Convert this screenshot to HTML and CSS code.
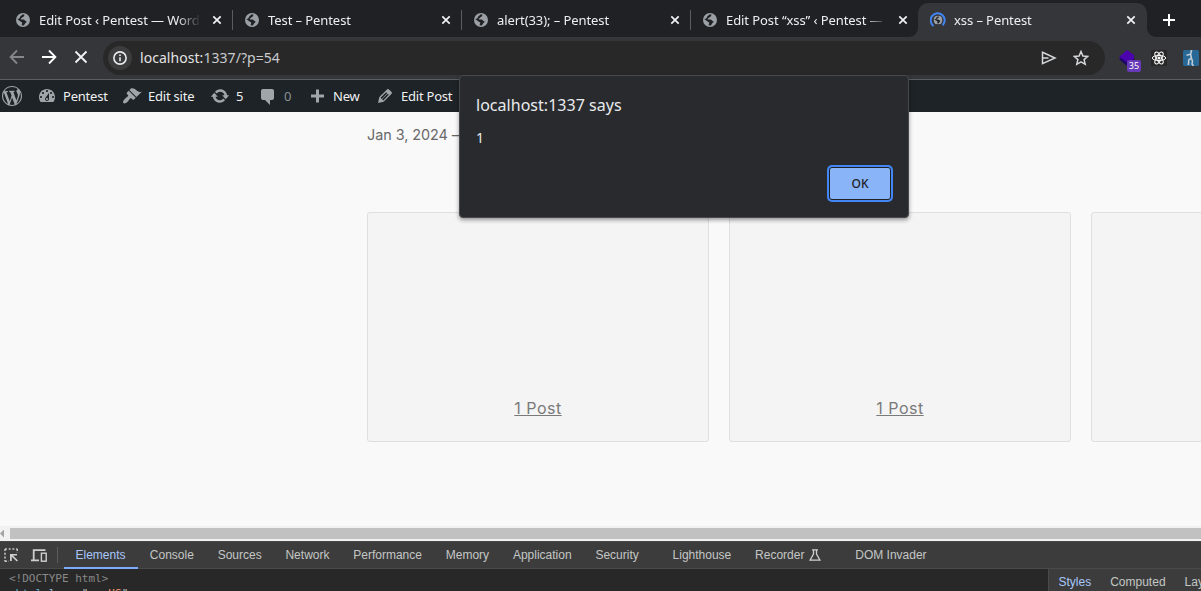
FILE: index.html
```html
<!DOCTYPE html>
<html lang="en">
<head>
<meta charset="utf-8">
<title>xss – Pentest</title>
<link rel="stylesheet" href="styles.css">
</head>
<body>
<svg class="defs" width="0" height="0">
  <symbol id="globe" viewBox="0 0 14 14"><circle cx="7" cy="7" r="7" fill="#9aa0a6"/><path d="M8.4 1.5C8.4 3 7.8 3.8 6.8 3.9 6 4 6.4 5.2 5.3 5.2 4.5 5.3 4.5 6.3 5.2 6.4H7.6C8.7 6.5 8.7 7.9 9.7 7.9 10.7 7.9 10.8 9 10 9.6 9 10.2 9 11.3 7.8 12.4L5.7 12.2C5.6 11 6.4 10.6 6.2 9.6 5.8 8.7 4.4 8.8 3.9 7.9L1.5 6.2C1.8 5.7 2.2 5.7 2.7 5.9L4 4.3C4.3 3 5.9 2.6 6.2 1.6Z" fill="#202124"/></symbol>
  <symbol id="close" viewBox="0 0 10 10"><path d="M1.3 1.3 8.7 8.7M8.7 1.3 1.3 8.7" stroke="#f1f3f4" stroke-width="1.7"/></symbol>
</svg>

<header class="tabs">
  <div class="tab"><svg class="fav"><use href="#globe"/></svg><span class="name">Edit Post ‹ Pentest — WordPress</span><svg class="x"><use href="#close"/></svg></div>
  <div class="tab"><svg class="fav"><use href="#globe"/></svg><span class="name">Test – Pentest</span><svg class="x"><use href="#close"/></svg></div>
  <div class="tab"><svg class="fav"><use href="#globe"/></svg><span class="name">alert(33); – Pentest</span><svg class="x"><use href="#close"/></svg></div>
  <div class="tab last"><svg class="fav"><use href="#globe"/></svg><span class="name">Edit Post “xss” ‹ Pentest — WordPress</span><svg class="x"><use href="#close"/></svg></div>
  <div class="tab active"><svg class="spin" viewBox="0 0 16 16"><path d="M3.6 14A7 7 0 1 1 12.7 13.2" fill="none" stroke="#4285f4" stroke-width="2"/><svg x="3.5" y="3.5" width="9" height="9"><use href="#globe"/></svg></svg><span class="name">xss – Pentest</span><svg class="x"><use href="#close"/></svg></div>
  <div class="newtab"><svg width="12" height="12" viewBox="0 0 12 12"><path d="M6 0V12M0 6H12" stroke="#fff" stroke-width="2"/></svg></div>
</header>

<nav class="toolbar">
  <svg class="nav" viewBox="0 0 16 16"><path d="M15 8H2M8 1.5 1.6 8 8 14.5" fill="none" stroke="#85878b" stroke-width="1.8"/></svg>
  <svg class="nav" viewBox="0 0 16 16"><path d="M1 8H14M8 1.5 14.4 8 8 14.5" fill="none" stroke="#fff" stroke-width="1.8"/></svg>
  <svg class="nav" viewBox="0 0 16 16"><path d="M2.5 2.5 13.5 13.5M13.5 2.5 2.5 13.5" stroke="#f1f3f4" stroke-width="1.8"/></svg>
  <div class="omnibox">
    <span class="info"><svg width="14" height="14" viewBox="0 0 14 14"><circle cx="7" cy="7" r="6.1" fill="none" stroke="#e8eaed" stroke-width="1.6"/><path d="M7 6.2V10.3M7 3.6V5.1" stroke="#e8eaed" stroke-width="1.6"/></svg></span>
    <span class="url">localhost:<i>1337/?p=54</i></span>
    <svg class="send" viewBox="0 0 16 14"><path d="M1.5 1.3 14 7 1.5 12.7V1.3ZM1.5 7H7.5" fill="none" stroke="#d5d7da" stroke-width="1.5"/></svg>
    <svg class="star" viewBox="0 0 16 16"><path d="M8 1.5 9.9 6 14.8 6.4 11.1 9.6 12.2 14.3 8 11.8 3.8 14.3 4.9 9.6 1.2 6.4 6.1 6Z" fill="none" stroke="#d5d7da" stroke-width="1.5"/></svg>
  </div>
  <div class="ext"><svg width="16" height="16" viewBox="0 0 16 16"><path d="M0 9 8 4 16 9 8 16Z" fill="#1c0769"/><path d="M0 7 8 0 15 5V9L8 12Z" fill="#4b04ad"/></svg><b>35</b></div>
  <svg class="react" viewBox="0 0 16 16"><rect width="16" height="16" fill="#282828"/><g fill="none" stroke="#fff"><ellipse cx="8" cy="8" rx="6.7" ry="2.6"/><ellipse cx="8" cy="8" rx="6.7" ry="2.6" transform="rotate(60 8 8)"/><ellipse cx="8" cy="8" rx="6.7" ry="2.6" transform="rotate(120 8 8)"/></g><circle cx="8" cy="8" r="1.5" fill="#fff"/></svg>
  <svg class="puppet" viewBox="0 0 16 16"><rect width="16" height="16" rx="1.5" fill="#286896"/><path d="M8.6 0 7.6 4.2 3.5 5.2M7.6 4.2 8.5 8.5M5.8 9.5 8.5 8.5 9.5 11M5.8 9.5 5.4 15" fill="none" stroke="#c3cfd9" stroke-width="1.6"/><path d="M9.5 11 9 14 10.5 16" fill="none" stroke="#c3cfd9" stroke-width="1.5"/></svg>
</nav>

<div class="wpbar">
  <svg class="wp" viewBox="0 0 20 20"><path d="M20 10c0-5.51-4.49-10-10-10C4.48 0 0 4.49 0 10c0 5.52 4.48 10 10 10 5.51 0 10-4.48 10-10zM7.78 15.37L4.37 6.22c.55-.02 1.17-.08 1.17-.08.5-.06.44-1.13-.06-1.11 0 0-1.45.11-2.37.11-.18 0-.37 0-.58-.01C4.12 2.69 6.87 1.11 10 1.11c2.33 0 4.45.87 6.05 2.34-.68-.11-1.65.39-1.65 1.58 0 .74.45 1.36.9 2.1.35.61.55 1.36.55 2.46 0 1.49-1.4 5-1.4 5l-3.03-8.37c.54-.02.82-.17.82-.17.5-.05.44-1.25-.06-1.22 0 0-1.44.12-2.38.12-.87 0-2.33-.12-2.33-.12-.5-.03-.56 1.2-.06 1.22l.92.08 1.26 3.41zM17.41 10c.24-.64.74-1.87.43-4.25.7 1.29 1.05 2.71 1.05 4.25 0 3.29-1.73 6.24-4.4 7.78.97-2.59 1.94-5.2 2.92-7.78zM6.1 18.09C3.12 16.65 1.11 13.53 1.11 10c0-1.3.23-2.48.72-3.59C3.25 10.3 4.67 14.2 6.1 18.09zm4.03-6.63l2.58 6.98c-.86.29-1.76.45-2.71.45-.79 0-1.57-.11-2.29-.33.81-2.38 1.62-4.74 2.42-7.1z"/></svg>
  <span class="item site"><svg viewBox="0 0 20 20"><path fill-rule="evenodd" d="M3.76 16h12.48c1.1-1.37 1.76-3.11 1.76-5 0-4.42-3.58-8-8-8s-8 3.58-8 8c0 1.89.66 3.63 1.76 5zM10 4c.55 0 1 .45 1 1s-.45 1-1 1-1-.45-1-1 .45-1 1-1zM6 6c.55 0 1 .45 1 1s-.45 1-1 1-1-.45-1-1 .45-1 1-1zm8 0c.55 0 1 .45 1 1s-.45 1-1 1-1-.45-1-1 .45-1 1-1zm-5.37 5.55L12 7v6c0 1.1-.9 2-2 2s-2-.9-2-2c0-.57.24-1.08.63-1.45zM4 10c.55 0 1 .45 1 1s-.45 1-1 1-1-.45-1-1 .45-1 1-1zm12 0c.55 0 1 .45 1 1s-.45 1-1 1-1-.45-1-1 .45-1 1-1zm-5 3c0-.55-.45-1-1-1s-1 .45-1 1 .45 1 1 1 1-.45 1-1z"/></svg>Pentest</span>
  <span class="item editsite"><svg viewBox="0 0 20 20"><path d="M14.48 11.06L7.41 3.99l1.5-1.5c.5-.56 2.3-.47 3.51.32 1.21.8 1.43 1.28 2.91 2.1 1.18.64 2.45 1.26 4.45.85zm-.71.71L6.7 4.7 4.93 6.47c-.39.39-.39 1.02 0 1.41l1.06 1.06c.39.39.39 1.03 0 1.42-.6.6-1.43 1.11-2.21 1.69-.35.26-.7.53-1.01.84C1.43 14.23.4 16.08 1.4 17.07c.99 1 2.84-.03 4.18-1.36.31-.31.58-.66.85-1.02.57-.78 1.08-1.61 1.69-2.21.39-.39 1.02-.39 1.41 0l1.06 1.06c.39.39 1.02.39 1.41 0z"/></svg>Edit site</span>
  <span class="item updates"><svg viewBox="0 0 20 20"><path d="M10.2 3.28c3.53 0 6.43 2.61 6.92 6h2.08l-3.5 4-3.5-4h2.32c-.45-1.97-2.21-3.45-4.32-3.45-1.45 0-2.73.71-3.54 1.78L4.95 5.66C6.23 4.2 8.11 3.28 10.2 3.28zm-.4 13.44c-3.52 0-6.43-2.61-6.92-6H.8l3.5-4c1.17 1.33 2.33 2.67 3.5 4H5.48c.45 1.97 2.21 3.45 4.32 3.45 1.45 0 2.73-.71 3.54-1.78l1.71 1.95c-1.28 1.46-3.15 2.38-5.25 2.38z"/></svg>5</span>
  <span class="item comments"><svg viewBox="0 0 20 20"><path d="M5 2h9c1.1 0 2 .9 2 2v7c0 1.1-.9 2-2 2h-2l-5 5v-5H5c-1.1 0-2-.9-2-2V4c0-1.1.9-2 2-2z" transform="translate(20 1) scale(-1 1)"/></svg>0</span>
  <span class="item new"><svg viewBox="0 0 20 20"><path d="M17 7v3h-5v5H9v-5H4V7h5V2h3v5h5z" transform="translate(0 1.5)"/></svg>New</span>
  <span class="item edit"><svg viewBox="0 0 20 20"><path fill-rule="evenodd" d="M13.89 3.39l2.71 2.72c.46.46.42 1.24.03 1.64l-8.01 8.02-5.56 1.16 1.16-5.58s7.6-7.63 7.99-8.03c.39-.39 1.22-.39 1.68.07zm-2.73 2.79l-5.59 5.61 1.11 1.11 5.54-5.65zm-2.97 8.23l5.58-5.6-1.07-1.08-5.59 5.6z"/></svg>Edit Post</span>
</div>

<main class="page">
  <p class="meta">Jan 3, 2024 —</p>
  <div class="cards">
    <div class="card"><a>1 Post</a></div>
    <div class="card"><a>1 Post</a></div>
    <div class="card"></div>
  </div>
</main>

<div class="scroll"><span class="arrow"></span><span class="thumb"></span></div>

<section class="devtools">
  <div class="panels">
    <svg class="inspect" viewBox="0 0 14 14"><path d="M1 1H13.5M1 1V13.5M13.3 1V5M1 13.3H5" fill="none" stroke="#c4c4c4" stroke-width="1.6" stroke-dasharray="2 1.7"/><path d="M6 6H13V7.6H9L14 12.4 12.8 13.6 7.8 8.8V13H6Z" fill="#cfcfcf"/></svg>
    <svg class="device" viewBox="0 0 16 13"><path d="M2.7 11V1.2H14.5M0 11.4H8" fill="none" stroke="#cfcfcf" stroke-width="1.8"/><rect x="10.4" y="4.2" width="4.8" height="8" fill="none" stroke="#cfcfcf" stroke-width="1.4"/></svg>
    <span class="sep"></span>
    <span class="panel on">Elements</span><span class="panel">Console</span><span class="panel">Sources</span><span class="panel">Network</span><span class="panel">Performance</span><span class="panel">Memory</span><span class="panel">Application</span><span class="panel security">Security</span><span class="panel">Lighthouse</span><span class="panel rec">Recorder<svg width="12" height="12" viewBox="0 0 12 12"><path d="M3 .8H9M4.5 1V5L1 11.2H11L7.5 5V1" fill="none" stroke="#cfcfcf" stroke-width="1.3"/></svg></span><span class="panel">DOM Invader</span>
  </div>
  <div class="body">
    <div class="dom"><div class="line doctype">&lt;!DOCTYPE html&gt;</div><div class="line"><span class="tag">&lt;html</span> <span class="attr">lang</span>="<span class="val">en-US</span>"<span class="tag">&gt;</span></div></div>
    <div class="side"><span class="on">Styles</span><span>Computed</span><span>Layout</span></div>
  </div>
</section>

<div class="dialog" role="alertdialog">
  <h1>localhost:1337 says</h1>
  <p>1</p>
  <button>OK</button>
</div>
</body>
</html>
```
FILE: styles.css
```css
* { box-sizing: border-box; }
body {
  margin: 0;
  width: 1201px;
  height: 591px;
  overflow: hidden;
  position: relative;
  background: #f9f9f9;
  font-family: "Noto Sans", sans-serif;
  display: flex;
  flex-direction: column;
}
svg { flex: none; display: block; }
.defs { position: absolute; }

/* Tab strip */
.tabs { flex: none; height: 37px; display: flex; align-items: flex-end; background: linear-gradient(#202124 20px, #35363a 20px); }
.tab { width: 229px; height: 37px; display: flex; align-items: center; padding: 4px 0 0 16px; background: #202124; color: #eceef0; font-size: 13px; letter-spacing: -.08px; }
.tab::after { content: ""; width: 1px; height: 20px; margin: -1px 0 0 10px; background: #5a5c60; }
.tab:first-child { width: 233px; flex: none; }
.tab + .tab { padding-left: 12px; }
.tab .fav { width: 14px; height: 14px; margin-top: -1px; }
.tab .name { width: 161px; margin-left: 9px; margin-top: -2px; overflow: hidden; white-space: nowrap; -webkit-mask-image: linear-gradient(90deg, #000 138px, transparent 162px); }
.tab .x { width: 10px; height: 10px; margin-left: 12px; margin-top: -1px; }
.tab.last { width: 227px; border-bottom-right-radius: 9px; }
.tab.last .name { width: 160px; }
.tab.last::after, .tab.active::after { display: none; }
.tab.active { height: 34px; width: 229px; padding: 1px 0 0 12px; border-radius: 10px 10px 0 0; background: #35363a; }
.tab.active .spin { width: 16px; height: 16px; margin-top: -2px; }
.tab.active .name { width: 160px; margin-left: 8px; }
.newtab { flex: 1; height: 37px; padding: 14px 0 0 16px; background: #202124; border-bottom-left-radius: 9px; }

/* Toolbar */
.toolbar { flex: none; height: 43px; display: flex; align-items: center; padding-left: 9px; background: #35363a; border-bottom: 1px solid #5d5e61; }
.nav { width: 16px; height: 16px; margin: -2px 16px 0 0; }
.omnibox { width: 1002px; height: 34px; margin: -1px 14px 0 -2px; padding-left: 5px; display: flex; align-items: center; border-radius: 17px; background: #282828; }
.info { width: 24px; height: 24px; display: grid; place-items: center; border-radius: 50%; background: #3c3c3c; }
.url { flex: 1; margin-left: 8px; font-size: 14px; letter-spacing: .05px; color: #e3e3e3; }
.url i { font-style: normal; color: #c9cbce; }
.send { width: 16px; height: 14px; margin-right: 16px; }
.star { width: 16px; height: 16px; margin-right: 16px; }
.ext { width: 16px; height: 16px; position: relative; margin-right: 16px; }
.ext b { position: absolute; left: 8px; top: 10px; width: 14px; height: 12px; border-radius: 2px; background: #673ab7; color: #fff; font: 9px/12px "Noto Sans", sans-serif; text-align: center; }
.react { width: 16px; height: 16px; margin-right: 16px; }
.puppet { width: 16px; height: 16px; }

/* WordPress admin bar */
.wpbar { flex: none; height: 32px; display: flex; align-items: center; padding-left: 2px; background: #1d2327; color: #f0f0f1; font-size: 13px; letter-spacing: -.22px; white-space: nowrap; }
.wpbar svg { fill: #a0a5aa; width: 20px; height: 20px; }
.item { display: flex; align-items: center; gap: 6px; }
.site { width: 85px; margin-left: 15px; }
.editsite { width: 88px; }
.updates { width: 47px; }
.comments { width: 50px; gap: 7px; color: #8a8f94; }
.new { width: 68px; }

/* Page */
.page { flex: none; height: 414px; padding-left: 367px; overflow: hidden; font-family: Inter, sans-serif; }
.meta { margin: 14px 0 0; height: 86px; font-size: 14.4px; line-height: 18px; letter-spacing: -.05px; color: #686868; }
.cards { display: flex; gap: 20px; width: 1100px; }
.card { width: 342px; height: 230px; border: 1px solid #dfdfdf; border-radius: 3px; background: #f4f4f4; display: flex; align-items: flex-end; justify-content: center; padding-bottom: 21px; }
.card a { font-size: 16px; line-height: 24px; letter-spacing: .5px; color: #7a7a7a; text-decoration: underline; }

/* Horizontal scrollbar */
.scroll { flex: none; height: 15px; display: flex; align-items: center; background: #f1f1f1; }
.arrow { width: 4px; height: 8px; margin-right: 6px; background: #a3a3a3; clip-path: polygon(0 50%, 100% 0, 100% 100%); }
.thumb { flex: 1; height: 11px; background: #c1c1c1; }

/* Developer tools */
.devtools { flex: none; height: 50px; font: 12px/14px "Liberation Sans", sans-serif; color: #c4c7c5; background: #282828; }
.panels { height: 28px; display: flex; align-items: center; padding-left: 4px; background: #3c3c3c; border-top: 1px solid #484848; border-bottom: 1px solid #4a4a4a; }
.inspect { width: 14px; height: 14px; margin-right: 13px; }
.device { width: 16px; height: 13px; margin-right: 10px; }
.sep { width: 1px; height: 16px; background: #5c5c5c; margin-right: 6px; }
.panel { height: 28px; line-height: 28px; padding: 0 12px 0 11.8px; white-space: nowrap; }
.panel.on { width: 74px; padding: 0 0 0 11.5px; border-bottom: 2px solid #7cacf8; color: #a8c7fa; }
.panel.security { margin-right: 10px; }
.rec { display: flex; align-items: center; gap: 5px; margin-right: 10px; }
.body { height: 22px; display: flex; overflow: hidden; }
.dom { flex: 1; padding: 3px 0 0 9px; font: 11px/14px "DejaVu Sans Mono", monospace; }
.line { height: 15px; white-space: nowrap; }
.doctype { color: #898989; }
.tag { color: #5db0d7; }
.attr { color: #9bbbdc; }
.val { color: #f29766; }
.side { width: 153px; flex: none; display: flex; gap: 19px; padding: 6px 0 0 9.5px; background: #3c3c3c; border-left: 1px solid #4a4a4a; white-space: nowrap; overflow: hidden; }
.side .on { color: #a8c7fa; }

/* Alert dialog */
.dialog { position: absolute; left: 459px; top: 75px; width: 450px; height: 143px; padding: 17px 16px; border: 1px solid #484a4d; border-radius: 4px; background: #292a2d; color: #e8eaed; box-shadow: 0 2px 4px rgba(0,0,0,.4); display: flex; flex-direction: column; }
.dialog h1 { margin: 0; font-size: 16px; line-height: 24px; font-weight: 400; letter-spacing: .03px; }
.dialog p { margin: 11px 0 0; font-size: 14px; line-height: 20px; }
.dialog button { align-self: flex-end; margin: 19px 1px 0 0; width: 62px; height: 34px; padding: 0; border: 1px solid #202124; border-radius: 3px; background: #8ab4f8; color: #202124; font: 500 12px "Noto Sans", sans-serif; box-shadow: 0 0 0 2px #4285f4; }
```
